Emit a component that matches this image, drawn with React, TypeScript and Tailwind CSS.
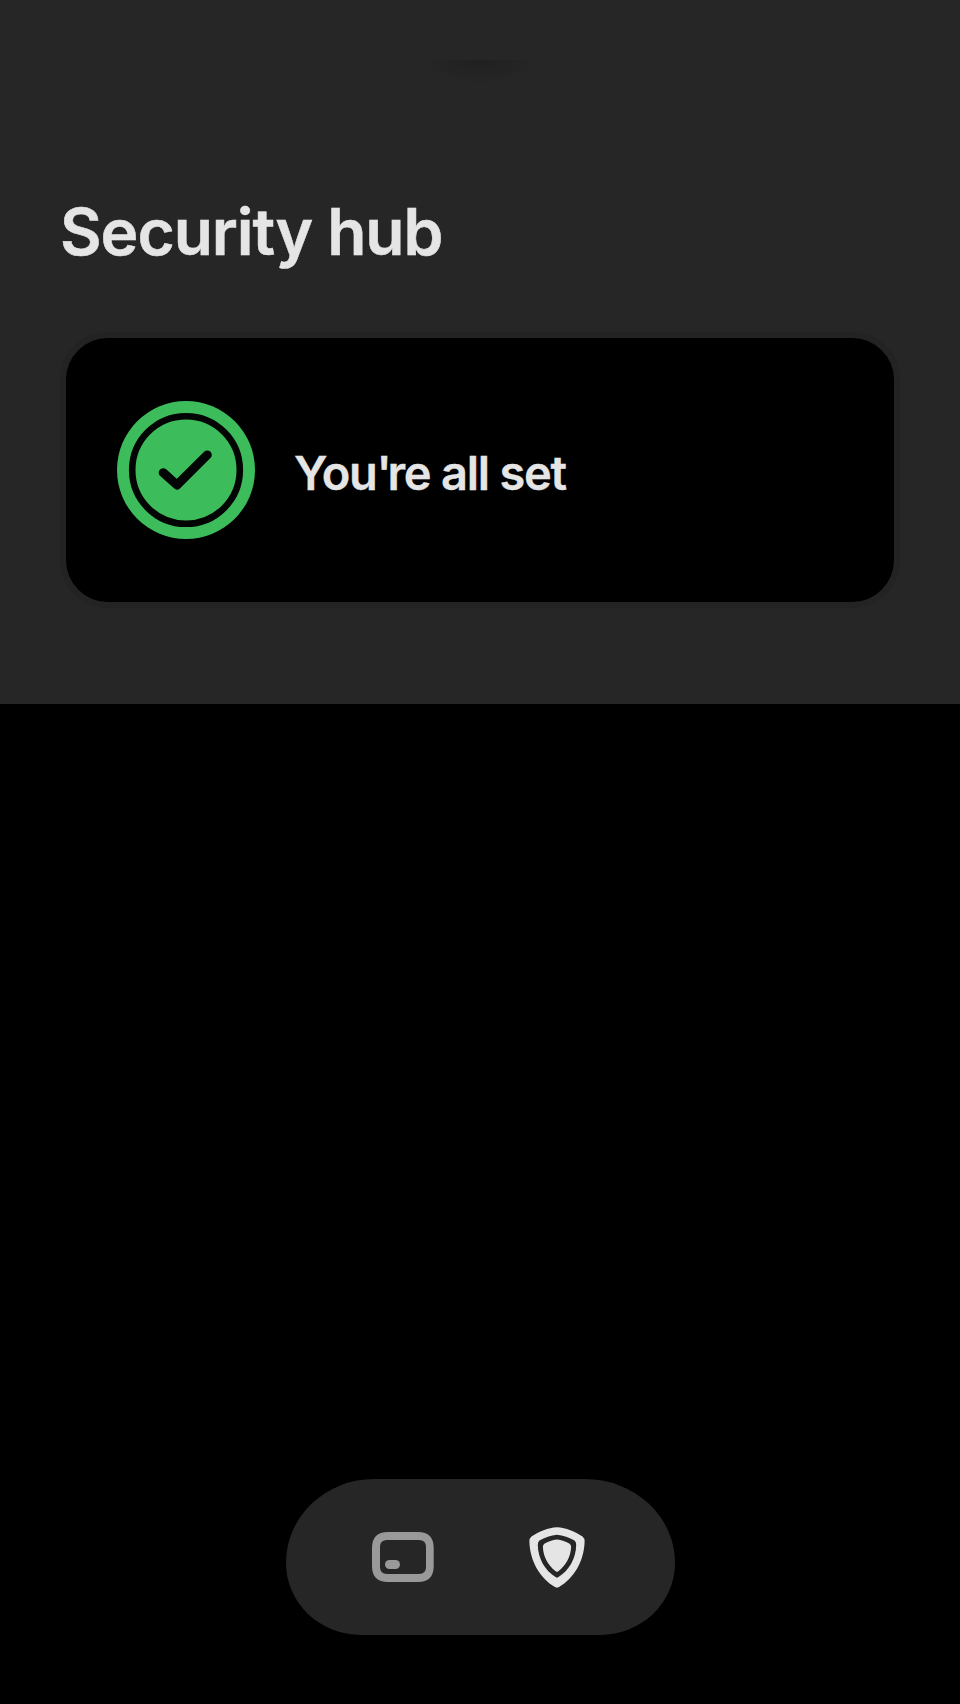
function StatusBadge() {
  return (
    <svg width="138" height="138" viewBox="0 0 138 138" className="shrink-0" aria-hidden="true">
      <circle cx="69" cy="69" r="69" fill="#3dbc5b" />
      <circle cx="69" cy="69" r="53.8" fill="none" stroke="#030504" strokeWidth="6.6" />
      <path d="M46.2 71.7 60 84 90.3 53.9" fill="none" stroke="#030504" strokeWidth="9" strokeLinecap="round" strokeLinejoin="round" />
    </svg>
  );
}

function CardIcon() {
  return (
    <svg width="62" height="50" viewBox="0 0 62 50" aria-hidden="true">
      <path
        fill="#999999"
        fillRule="evenodd"
        d="M16 0H46Q61.700 0 61.700 16V34Q61.700 50 46 50H16Q0 50 0 34V16Q0 0 16 0ZM15 8Q8 8 8 15V35Q8 42 15 42H47Q54 42 54 35V15Q54 8 47 8Z"
      />
      <rect x="13" y="28" width="15" height="9" rx="4.5" fill="#999999" />
    </svg>
  );
}

function ShieldIcon() {
  return (
    <svg width="56" height="61" viewBox="0 0 56 61" aria-hidden="true">
      <path d="M28 .2C37 .7 46 4.300 53.500 9.500Q55.800 11.300 55.600 15C55 34 45 51.500 30 60Q28 61.200 26 60C11 51.500 1 34 .4 15Q.2 11.300 2.500 9.500C10 4.300 19 .7 28 .2Z" fill="#e5e5e5" />
      <path d="M28 7.700C34 8.300 40.500 10.300 45.500 13.500Q47.200 14.800 47.200 18C47 31.500 40 43.500 29.500 50Q28 51 26.500 50C16 43.500 9 31.500 8.800 18Q8.800 14.800 10.500 13.500C15.500 10.300 22 8.300 28 7.700Z" fill="#262626" />
      <path d="M28 12.500C32.500 12.900 37 14.500 40.700 16.800Q42.200 18 42.100 20C41.800 29.500 37 38.500 29.300 44.200Q28 45.200 26.700 44.200C19 38.500 14.200 29.500 13.900 20Q13.800 18 15.300 16.800C19 14.500 23.500 12.900 28 12.500Z" fill="#e5e5e5" />
    </svg>
  );
}

export default function App() {
  return (
    <div className="flex h-[1704px] w-[960px] flex-col bg-black font-['Inter',sans-serif] font-semibold text-[#e5e5e5]">
      <header className="flex h-[704px] flex-col bg-[#262626] px-[60px] pt-[60px]">
        <div className="h-7 w-[120px] self-center bg-[radial-gradient(ellipse_56px_25px_at_50%_0%,#202020_0%,#262626_100%)]" />
        <h1 className="mt-[104px] h-20 text-[64px] leading-20 tracking-[-1.03px] [-webkit-text-stroke:0.5px_#e5e5e5]">Security hub</h1>
        <section className="mt-[60px] flex h-[276px] items-center rounded-[48px] border-[6px] border-[#232323] bg-black pl-[51px]">
          <StatusBadge />
          <h2 className="mt-1.5 ml-[39px] text-[47px] leading-[60px] tracking-[-1.25px] [-webkit-text-stroke:0.3px_#e5e5e5]">
            You<span className="tracking-[-4.4px]">'</span>re all set
          </h2>
        </section>
      </header>
      <main className="flex-1" />
      <nav className="mb-[69px] ml-[285.5px] flex h-[156px] w-[389px] items-start rounded-[88px_90px_75px_75px/84px_84px_72px_72px] bg-[#262626] pl-[86.5px]">
        <button className="mt-[53px]" aria-label="Cards"><CardIcon /></button>
        <button className="mt-12 ml-[95px]" aria-label="Security"><ShieldIcon /></button>
      </nav>
    </div>
  );
}
